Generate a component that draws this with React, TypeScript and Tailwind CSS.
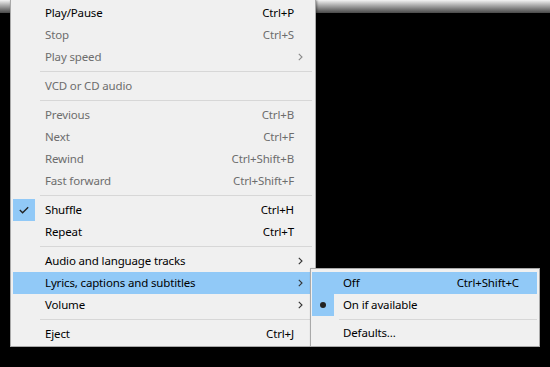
import React from 'react';

type Item =
  | { kind: 'sep' }
  | {
      kind: 'item';
      label: string;
      shortcut?: string;
      disabled?: boolean;
      submenu?: boolean;
      checked?: boolean;
      active?: boolean;
    };

const mainItems: Item[] = [
  { kind: 'item', label: 'Play/Pause', shortcut: 'Ctrl+P' },
  { kind: 'item', label: 'Stop', shortcut: 'Ctrl+S', disabled: true },
  { kind: 'item', label: 'Play speed', disabled: true, submenu: true },
  { kind: 'sep' },
  { kind: 'item', label: 'VCD or CD audio', disabled: true },
  { kind: 'sep' },
  { kind: 'item', label: 'Previous', shortcut: 'Ctrl+B', disabled: true },
  { kind: 'item', label: 'Next', shortcut: 'Ctrl+F', disabled: true },
  { kind: 'item', label: 'Rewind', shortcut: 'Ctrl+Shift+B', disabled: true },
  { kind: 'item', label: 'Fast forward', shortcut: 'Ctrl+Shift+F', disabled: true },
  { kind: 'sep' },
  { kind: 'item', label: 'Shuffle', shortcut: 'Ctrl+H', checked: true },
  { kind: 'item', label: 'Repeat', shortcut: 'Ctrl+T' },
  { kind: 'sep' },
  { kind: 'item', label: 'Audio and language tracks', submenu: true },
  { kind: 'item', label: 'Lyrics, captions and subtitles', submenu: true, active: true },
  { kind: 'item', label: 'Volume', submenu: true },
  { kind: 'sep' },
  { kind: 'item', label: 'Eject', shortcut: 'Ctrl+J' },
];

function Chevron({ muted }: { muted?: boolean }) {
  return (
    <svg width="5" height="8" viewBox="0 0 5 8" className="block">
      <path d="M0.8 0.8 L4 4 L0.8 7.2" fill="none" stroke={muted ? '#8a8a8a' : '#333'} strokeWidth="1.1" />
    </svg>
  );
}

function Check() {
  return (
    <svg width="10" height="8" viewBox="0 0 10 8" className="block">
      <path d="M0.8 4 L3.6 6.8 L9.2 1.2" fill="none" stroke="#222" strokeWidth="1.3" />
    </svg>
  );
}

function MainMenu() {
  return (
    <div className="absolute left-[10px] top-[-1px] w-[306px] border border-[#a9a9a9] bg-[#f0f0f0] pt-[2px] pb-[1px] shadow-[1px_1px_2px_rgba(0,0,0,0.4)]">
      {mainItems.map((it, i) =>
        it.kind === 'sep' ? (
          <div key={i} className="flex h-[7px] items-center">
            <div className="ml-[29px] mr-[3px] h-px flex-1 bg-[#d7d7d7]" />
          </div>
        ) : (
          <div
            key={i}
            className={`ml-[2px] mr-[5px] flex h-[22px] items-center ${it.active ? 'bg-[#91c9f7]' : ''} ${it.disabled ? 'text-[#6d6d6d]' : 'text-black'}`}
          >
            <div className={`flex h-full w-[22px] items-center justify-center ${it.checked ? 'bg-[#91c9f7]' : ''}`}>
              {it.checked && <Check />}
            </div>
            <span className="ml-[10px] flex-1">{it.label}</span>
            {it.shortcut && <span className="pr-[16px]">{it.shortcut}</span>}
            {it.submenu && (
              <div className="flex w-[22px] items-center justify-center pl-[2px]">
                <Chevron muted={it.disabled} />
              </div>
            )}
          </div>
        )
      )}
    </div>
  );
}

function SubMenu() {
  return (
    <div className="absolute left-[310px] top-[268px] w-[230px] border border-[#a9a9a9] bg-[#f0f0f0] pt-[3px] pb-[2px] shadow-[1px_1px_2px_rgba(0,0,0,0.4)]">
      <div className="ml-px mr-[2px] flex h-[22px] items-center bg-[#91c9f7]">
        <div className="w-[22px]" />
        <span className="ml-[9px] flex-1">Off</span>
        <span className="pr-[18px]">Ctrl+Shift+C</span>
      </div>
      <div className="ml-px mr-[2px] flex h-[22px] items-center">
        <div className="flex h-full w-[22px] items-center justify-center bg-[#91c9f7]">
          <div className="h-[6px] w-[6px] rounded-full bg-[#222]" />
        </div>
        <span className="ml-[9px] flex-1">On if available</span>
      </div>
      <div className="flex h-[6px] items-center">
        <div className="ml-[28px] mr-[2px] h-px flex-1 bg-[#d7d7d7]" />
      </div>
      <div className="ml-px mr-[2px] flex h-[22px] items-center">
        <div className="w-[22px]" />
        <span className="ml-[9px] flex-1">Defaults...</span>
      </div>
    </div>
  );
}

export default function App() {
  return (
    <div
      className="relative h-[367px] w-[550px] overflow-hidden bg-black text-[11.5px] leading-none tracking-[-0.15px]"
      style={{ fontFamily: '"Noto Sans", "Open Sans", sans-serif' }}
    >
      <div className="h-[13px] w-full bg-gradient-to-b from-[#f4f4f4] via-[#9c9c9c] to-[#4a4a4a]" />
      <MainMenu />
      <SubMenu />
    </div>
  );
}
